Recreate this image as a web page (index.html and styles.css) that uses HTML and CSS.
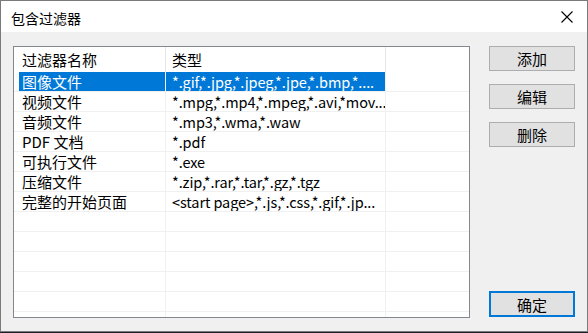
FILE: index.html
```html
<!DOCTYPE html>
<html lang="zh-CN">
<head>
    <meta charset="UTF-8">
    <title>包含过滤器</title>
    <link rel="stylesheet" href="styles.css">
</head>
<body>
    <div class="window">
        <div class="titlebar">
            <span class="title">包含过滤器</span>
            <span class="close">
                <svg width="12" height="12" viewBox="0 0 12 12">
                    <path d="M0.5 0.5 L11.5 11.5 M11.5 0.5 L0.5 11.5" stroke="#000" stroke-width="1.1" fill="none"/>
                </svg>
            </span>
        </div>
        <div class="content">
            <div class="list">
                <div class="list-head">
                    <div class="cell name">过滤器名称</div>
                    <div class="cell type">类型</div>
                    <div class="cell fill"></div>
                </div>
                <div class="row selected">
                    <div class="cell name"><span>图像文件</span></div>
                    <div class="cell type"><span>*.gif,*.jpg,*.jpeg,*.jpe,*.bmp,*....</span></div>
                    <div class="cell fill"></div>
                </div>
                <div class="row">
                    <div class="cell name">视频文件</div>
                    <div class="cell type">*.mpg,*.mp4,*.mpeg,*.avi,*mov...</div>
                    <div class="cell fill"></div>
                </div>
                <div class="row">
                    <div class="cell name">音频文件</div>
                    <div class="cell type">*.mp3,*.wma,*.waw</div>
                    <div class="cell fill"></div>
                </div>
                <div class="row">
                    <div class="cell name">PDF 文档</div>
                    <div class="cell type">*.pdf</div>
                    <div class="cell fill"></div>
                </div>
                <div class="row">
                    <div class="cell name">可执行文件</div>
                    <div class="cell type">*.exe</div>
                    <div class="cell fill"></div>
                </div>
                <div class="row">
                    <div class="cell name">压缩文件</div>
                    <div class="cell type">*.zip,*.rar,*.tar,*.gz,*.tgz</div>
                    <div class="cell fill"></div>
                </div>
                <div class="row">
                    <div class="cell name">完整的开始页面</div>
                    <div class="cell type">&lt;start page&gt;,*.js,*.css,*.gif,*.jp...</div>
                    <div class="cell fill"></div>
                </div>
                <div class="row"><div class="cell name"></div><div class="cell type"></div><div class="cell fill"></div></div>
                <div class="row"><div class="cell name"></div><div class="cell type"></div><div class="cell fill"></div></div>
                <div class="row"><div class="cell name"></div><div class="cell type"></div><div class="cell fill"></div></div>
                <div class="row"><div class="cell name"></div><div class="cell type"></div><div class="cell fill"></div></div>
                <div class="row"><div class="cell name"></div><div class="cell type"></div><div class="cell fill"></div></div>
                <div class="row"><div class="cell name"></div><div class="cell type"></div><div class="cell fill"></div></div>
                <div class="row"><div class="cell name"></div><div class="cell type"></div><div class="cell fill"></div></div>
            </div>
            <div class="buttons">
                <button class="btn">添加</button>
                <button class="btn">编辑</button>
                <button class="btn">删除</button>
                <button class="btn btn-default">确定</button>
            </div>
        </div>
    </div>
</body>
</html>
```

FILE: styles.css
```css
html, body {
    margin: 0;
    padding: 0;
}

body {
    width: 588px;
    height: 333px;
    background: #1d1f2b;
    font-family: "Noto Sans CJK SC", sans-serif;
    color: #000;
    overflow: hidden;
}

.window {
    width: 586px;
    height: 330px;
    border: 1px solid #7a7a7a;
    background: #f0f0f0;
    display: flex;
    flex-direction: column;
}

/* Title bar */
.titlebar {
    height: 31px;
    background: #fff;
    display: flex;
    align-items: center;
    justify-content: space-between;
    padding: 0 14px 0 10px;
}

.title {
    font-size: 14px;
    margin-top: 2px;
}

.close {
    display: flex;
    width: 12px;
    height: 12px;
}

/* Body */
.content {
    flex: 1;
    display: flex;
    padding: 14px 12px 14px 12px;
    gap: 19px;
    min-height: 0;
}

.list {
    width: 455px;
    height: 270px;
    border: 1px solid #828790;
    background: #fff;
    overflow: hidden;
    font-size: 15px;
}

.list-head {
    display: flex;
    height: 25px;
    line-height: 25px;
}

.list-head .cell {
    border-right: 1px solid #e5e5e5;
}

.row {
    display: flex;
    height: 19px;
    line-height: 19px;
    border-bottom: 1px solid #f0f0f0;
}

.cell {
    white-space: nowrap;
    overflow: hidden;
    border-right: 1px solid #f0f0f0;
}

.cell.name {
    width: 152px;
    padding-left: 8px;
    box-sizing: border-box;
}

.cell.type {
    width: 220px;
    padding-left: 6px;
    box-sizing: border-box;
}

.row .cell.type {
    font-size: 14.5px;
    letter-spacing: -0.1px;
}

.cell.fill {
    flex: 1;
    border-right: none;
}

.list-head .cell.fill {
    border-right: none;
}

/* selected row */
.row.selected .cell {
    color: #fff;
}

.row.selected .cell.name {
    padding-left: 5px;
}

.row.selected .cell.name span {
    display: block;
    background: #0078d7;
    padding-left: 3px;
}

.row.selected .cell.type {
    background: #0078d7;
}

/* Buttons */
.buttons {
    width: 86px;
    display: flex;
    flex-direction: column;
    gap: 13px;
}

.btn {
    width: 86px;
    height: 25px;
    padding: 0;
    background: #e1e1e1;
    border: 1px solid #adadad;
    font-family: "Noto Sans CJK SC", sans-serif;
    font-size: 15px;
    line-height: 23px;
    color: #000;
}

.btn-default {
    margin-top: auto;
    height: 26px;
    border: 2px solid #0078d7;
}
```
